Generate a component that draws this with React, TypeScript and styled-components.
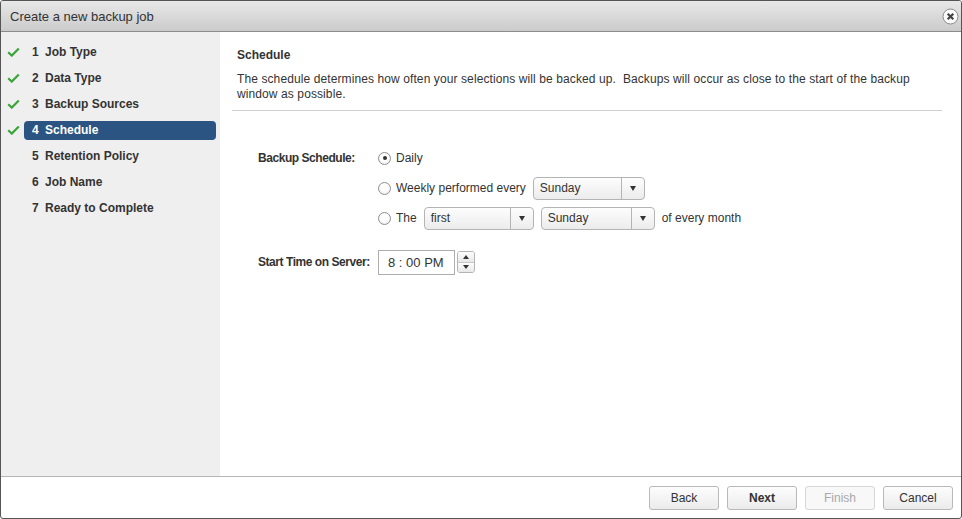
import React from 'react';
import styled, {createGlobalStyle} from 'styled-components';

const GlobalStyle = createGlobalStyle`
  html, body {
    margin: 0;
    padding: 0;
    background: #fff;
  }
  body {
    font-family: "Liberation Sans", Arial, sans-serif;
    font-size: 12px;
    color: #333;
  }
`

const Window = styled.div`
  width: 962px;
  height: 519px;
  box-sizing: border-box;
  border: 1px solid #555;
  border-radius: 3px;
  display: flex;
  flex-direction: column;
  overflow: hidden;
  background: #fff;
`

const TitleBar = styled.div`
  height: 30px;
  flex: none;
  display: flex;
  align-items: center;
  justify-content: space-between;
  padding: 0 2px 0 9px;
  background: linear-gradient(#e8e8e8, #cbcbcb);
  border-bottom: 1px solid #8c8c8c;
  font-size: 13px;
  color: #333;
`

const CloseButton = styled.button`
  width: 17px;
  height: 17px;
  padding: 0;
  border: none;
  background: none;
  display: flex;
  cursor: pointer;
`

const Body = styled.div`
  flex: 1;
  display: flex;
  min-height: 0;
`

const Sidebar = styled.nav`
  width: 219px;
  flex: none;
  background: #efefef;
  padding-top: 7px;
  box-sizing: border-box;
`

const StepRow = styled.div`
  height: 26px;
  display: flex;
  align-items: center;
`

const CheckSlot = styled.span`
  width: 23px;
  flex: none;
  display: flex;
  justify-content: center;
  padding-left: 2px;
  box-sizing: border-box;
`

const StepLabel = styled.span<{$active?: boolean}>`
  flex: 1;
  height: 19px;
  margin-right: 4px;
  padding-left: 8px;
  display: flex;
  align-items: center;
  border-radius: 4px;
  font-weight: bold;
  color: ${p => (p.$active ? '#fff' : '#333')};
  background: ${p => (p.$active ? '#2b5482' : 'transparent')};
`

const StepNumber = styled.span`
  width: 13px;
`

const Content = styled.main`
  flex: 1;
  padding: 16px 19px 0 12px;
`

const Heading = styled.h2`
  margin: 0 0 9px 5px;
  font-size: 12px;
  line-height: 15px;
  font-weight: bold;
  color: #333;
`

const Intro = styled.p`
  margin: 0 4px 8px 5px;
  line-height: 15px;
  white-space: pre-wrap;
  letter-spacing: 0.1px;
`

const Divider = styled.hr`
  margin: 0;
  border: none;
  border-top: 1px solid #cfcfcf;
`

const Form = styled.div`
  margin: 32px 0 0 26px;
  display: grid;
  grid-template-columns: 120px 1fr;
  grid-template-rows: 30px 30px 30px 14px 30px;
  align-items: center;
`

const FieldLabel = styled.span`
  font-weight: bold;
  white-space: nowrap;
  letter-spacing: -0.45px;
`

const Spacer = styled.div`
  grid-column: 1 / span 2;
`

const Line = styled.div`
  display: flex;
  align-items: center;
  gap: 7px;
`

const Radio = styled.label`
  display: flex;
  align-items: center;
  gap: 5px;
`

const RadioCircle = styled.span<{$checked?: boolean}>`
  width: 13px;
  height: 13px;
  box-sizing: border-box;
  border-radius: 50%;
  border: 1px solid #8f8f8f;
  background: radial-gradient(circle at 50% 40%, #fff 40%, #e4e4e4);
  display: flex;
  align-items: center;
  justify-content: center;
  &::after {
    content: '';
    width: 4px;
    height: 4px;
    border-radius: 50%;
    background: #333;
    display: ${p => (p.$checked ? 'block' : 'none')};
  }
`

const Select = styled.div<{$width: number}>`
  width: ${p => p.$width}px;
  height: 23px;
  box-sizing: border-box;
  border: 1px solid #b4b4b4;
  border-radius: 4px;
  background: linear-gradient(#fdfdfd, #ececec);
  display: flex;
  align-items: stretch;
`

const SelectValue = styled.span`
  flex: 1;
  padding-left: 6px;
  display: flex;
  align-items: center;
`

const SelectArrow = styled.span`
  width: 22px;
  border-left: 1px solid #b4b4b4;
  display: flex;
  align-items: center;
  justify-content: center;
  &::after {
    content: '';
    border-left: 3px solid transparent;
    border-right: 3px solid transparent;
    border-top: 5px solid #333;
  }
`

const TimeInput = styled.div`
  width: 77px;
  height: 25px;
  box-sizing: border-box;
  border: 1px solid #adadad;
  padding-left: 9px;
  display: flex;
  align-items: center;
  font-size: 13px;
  background: #fff;
`

const Spinner = styled.div`
  width: 18px;
  height: 22px;
  box-sizing: border-box;
  border: 1px solid #b4b4b4;
  border-radius: 3px;
  display: flex;
  flex-direction: column;
  overflow: hidden;
  margin-left: 2px;
`

const SpinHalf = styled.span<{$up?: boolean}>`
  flex: 1;
  background: linear-gradient(#fdfdfd, #e8e8e8);
  display: flex;
  align-items: center;
  justify-content: center;
  & + & {
    border-top: 1px solid #c8c8c8;
  }
  &::after {
    content: '';
    border-left: 3px solid transparent;
    border-right: 3px solid transparent;
    ${p => (p.$up ? 'border-bottom: 4px solid #333;' : 'border-top: 4px solid #333;')}
  }
`

const TimeField = styled.div`
  display: flex;
  align-items: center;
`

const Footer = styled.footer`
  height: 42px;
  flex: none;
  border-top: 1px solid #b6b6b6;
  display: flex;
  justify-content: flex-end;
  align-items: flex-start;
  gap: 8px;
  padding: 9px 8px 0 0;
  box-sizing: border-box;
`

const Button = styled.button<{$primary?: boolean}>`
  width: 70px;
  height: 24px;
  border-radius: 3px;
  border: 1px solid #b9b9b9;
  background: linear-gradient(#fdfdfd, #ebebeb);
  font-family: "Liberation Sans", Arial, sans-serif;
  font-size: 12px;
  font-weight: ${p => (p.$primary ? 'bold' : 'normal')};
  color: #333;
  padding: 0;
  &:disabled {
    color: #a8a8a8;
    border-color: #d6d6d6;
    background: #f8f8f8;
  }
`

const Check = () => (
  <svg width="13" height="10" viewBox="0 0 13 10">
    <path d="M1.2 5.2 L4.8 8.6 L11.8 1.4" fill="none" stroke="#3ba53a" strokeWidth="2.2" />
  </svg>
)

const CloseIcon = () => (
  <svg width="17" height="17" viewBox="0 0 17 17">
    <circle cx="8.5" cy="8.5" r="7.5" fill="#fafafa" stroke="#8a8a8a" />
    <path d="M5.7 5.7 L11.3 11.3 M11.3 5.7 L5.7 11.3" stroke="#444" strokeWidth="2.2" />
  </svg>
)

const steps = [
  {n: 1, label: 'Job Type', done: true},
  {n: 2, label: 'Data Type', done: true},
  {n: 3, label: 'Backup Sources', done: true},
  {n: 4, label: 'Schedule', done: true, active: true},
  {n: 5, label: 'Retention Policy'},
  {n: 6, label: 'Job Name'},
  {n: 7, label: 'Ready to Complete'},
]

const App: React.FC = () => {
  return (
    <Window>
      <GlobalStyle />
      <TitleBar>
        <span>Create a new backup job</span>
        <CloseButton aria-label="Close"><CloseIcon /></CloseButton>
      </TitleBar>
      <Body>
        <Sidebar>
          {steps.map(s => (
            <StepRow key={s.n}>
              <CheckSlot>{s.done && <Check />}</CheckSlot>
              <StepLabel $active={s.active}>
                <StepNumber>{s.n}</StepNumber>
                {s.label}
              </StepLabel>
            </StepRow>
          ))}
        </Sidebar>
        <Content>
          <Heading>Schedule</Heading>
          <Intro>The schedule determines how often your selections will be backed up.  Backups will occur as close to the start of the backup window as possible.</Intro>
          <Divider />
          <Form>
            <FieldLabel>Backup Schedule:</FieldLabel>
            <Radio><RadioCircle $checked />Daily</Radio>
            <span />
            <Line>
              <Radio><RadioCircle />Weekly performed every</Radio>
              <Select $width={112}><SelectValue>Sunday</SelectValue><SelectArrow /></Select>
            </Line>
            <span />
            <Line>
              <Radio><RadioCircle />The</Radio>
              <Select $width={110}><SelectValue>first</SelectValue><SelectArrow /></Select>
              <Select $width={114}><SelectValue>Sunday</SelectValue><SelectArrow /></Select>
              <span>of every month</span>
            </Line>
            <Spacer />
            <FieldLabel>Start Time on Server:</FieldLabel>
            <TimeField>
              <TimeInput>8 : 00 PM</TimeInput>
              <Spinner><SpinHalf $up /><SpinHalf /></Spinner>
            </TimeField>
          </Form>
        </Content>
      </Body>
      <Footer>
        <Button>Back</Button>
        <Button $primary>Next</Button>
        <Button disabled>Finish</Button>
        <Button>Cancel</Button>
      </Footer>
    </Window>
  );
}

export default App;
